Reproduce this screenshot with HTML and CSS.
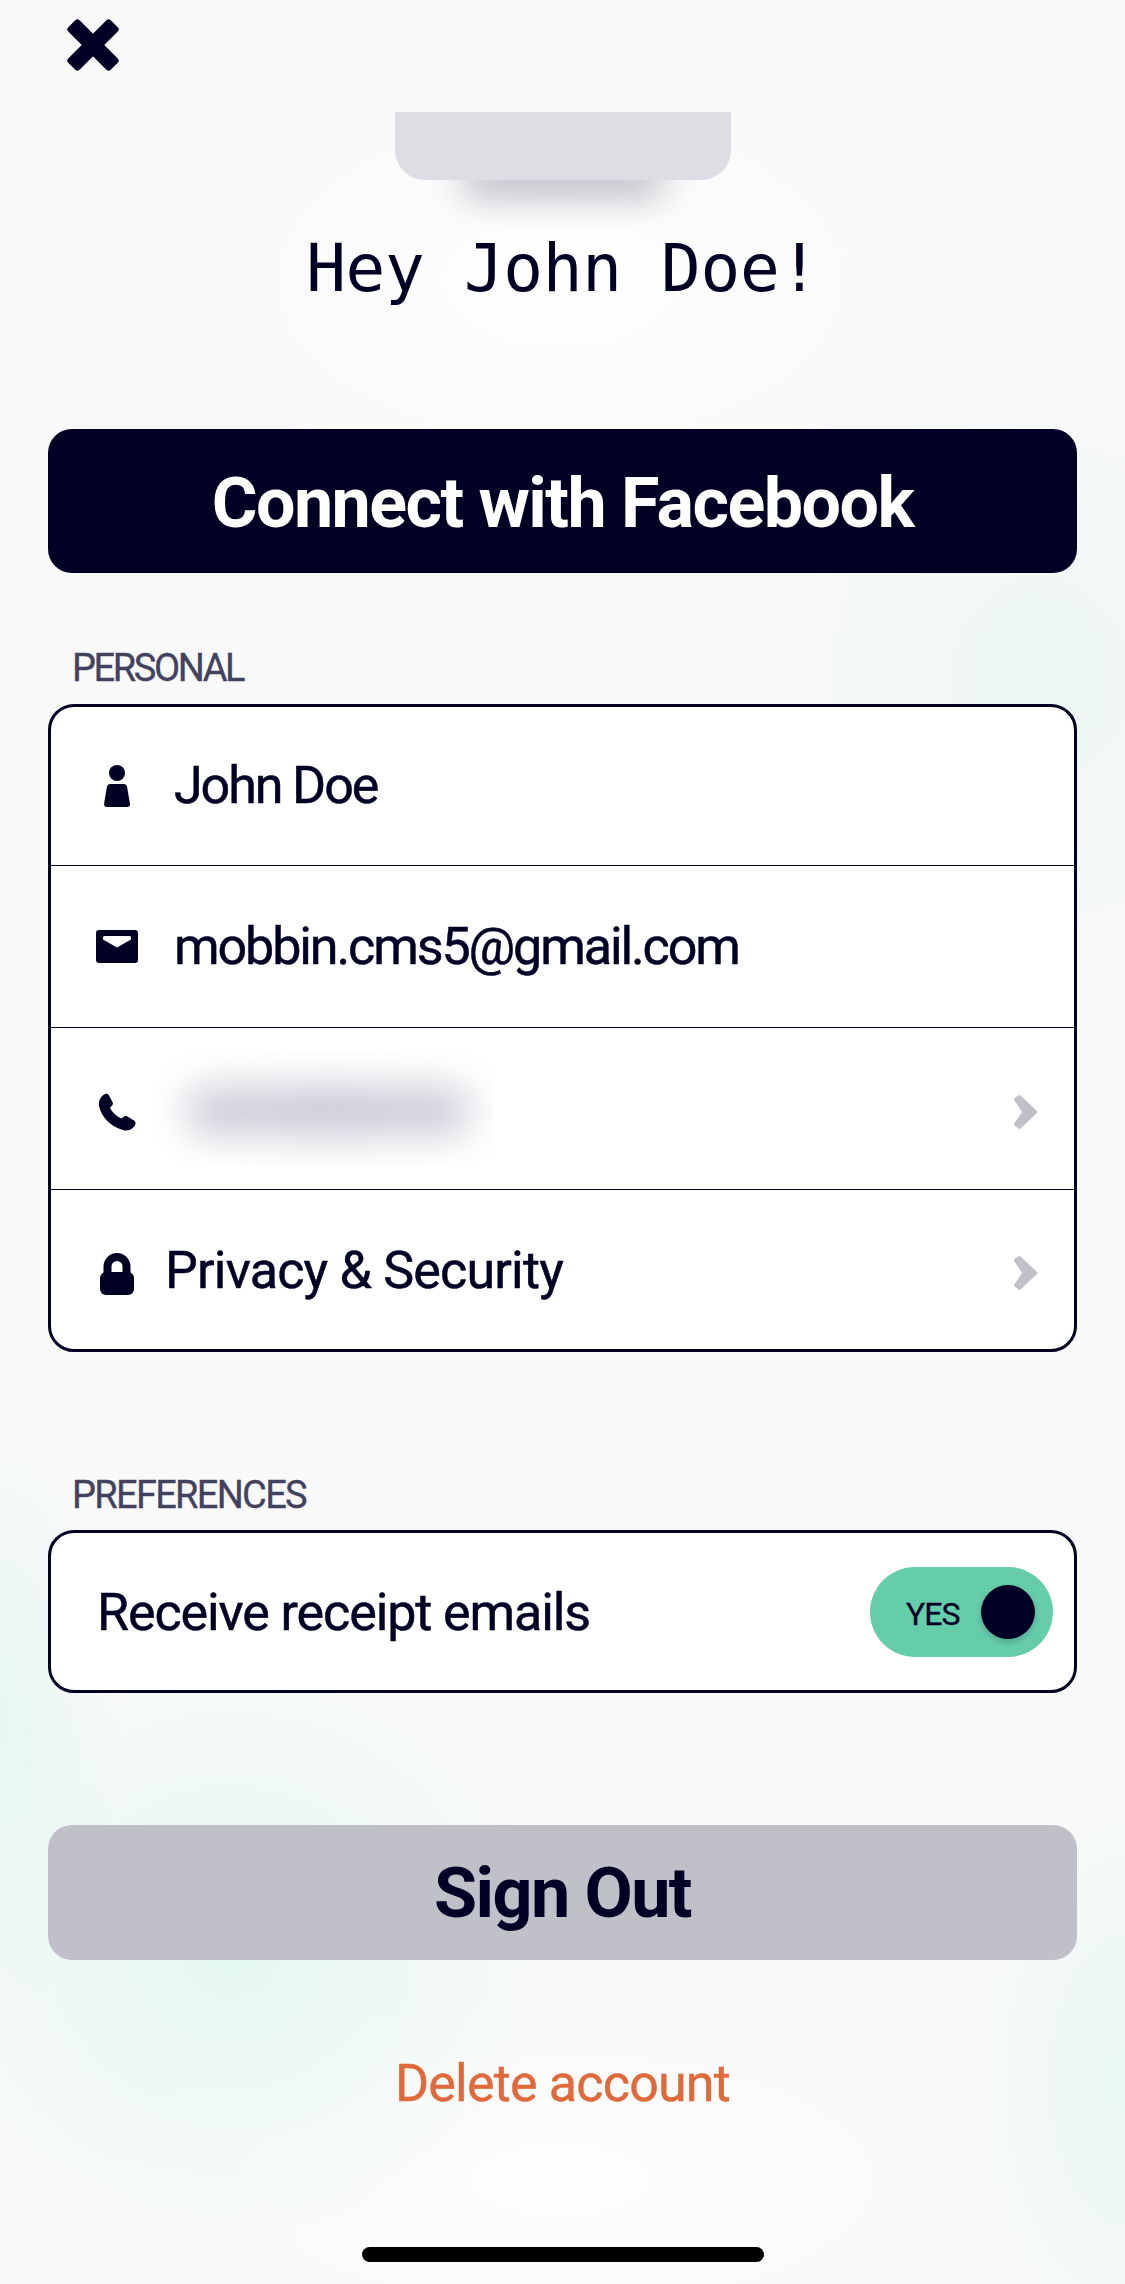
FILE: index.html
```html
<!DOCTYPE html>
<html lang="en">
<head>
<meta charset="utf-8">
<title>Account</title>
<link rel="stylesheet" href="styles.css">
</head>
<body>
<main class="page">
  <button class="close" aria-label="Close">
    <svg class="close-icon" viewBox="0 0 54 54"><g transform="rotate(45 27 27)"><rect x="-3" y="19" width="60" height="16" rx="3"/><rect x="19" y="-3" width="16" height="60" rx="3"/></g></svg>
  </button>
  <div class="avatar"></div>
  <h1 class="greeting">Hey John Doe!</h1>
  <button class="btn btn-primary">Connect with Facebook</button>

  <h2 class="label label-personal">PERSONAL</h2>
  <section class="card card-personal">
    <div class="row">
      <span class="slot"><svg class="icon-person" viewBox="0 0 26 42"><circle cx="13" cy="8" r="8"/><path d="M6 19h14q2.500 0 3 2.500L26 39q0 3-3 3H3q-3 0-3-3L3 21.500Q3.500 19 6 19Z"/></svg></span>
      <span class="text text-name">John Doe</span>
    </div>
    <div class="row">
      <span class="slot"><svg class="icon-mail" viewBox="0 0 42 33"><rect width="42" height="33" rx="3"/><path class="cut" d="M7 9.500L21 17.500L35 9.500V7.500Q35 6 33.500 6H8.500Q7 6 7 7.500Z"/></svg></span>
      <span class="text text-name">mobbin.cms5@gmail.com</span>
    </div>
    <div class="row">
      <span class="slot"><svg class="icon-phone" viewBox="0 0 38 38"><path d="M6 1.500C8 0 10 .5 11 2.500L14.500 9C15.500 11 14.500 12.500 12 14.500C13.500 18.500 18.500 23.500 23.500 25.500C25.500 23.500 27.500 22.500 29.500 23.500L36 27.500C38 29 38 31 36.500 33C33.500 37 29 38.500 25 37C13 34 3.500 24.500 1 13C0 8 2.500 4 6 1.500Z"/></svg></span>
      <span class="redacted" aria-hidden="true"><span class="smears"><i class="smear smear-a"></i><i class="smear smear-b"></i><i class="smear smear-c"></i></span></span>
      <svg class="chevron" viewBox="0 0 26 36"><path d="M1.500 5L6.500 1.500L24 18L6.500 34.500L1.500 30.500L10 18Z"/></svg>
    </div>
    <div class="row">
      <span class="slot"><svg class="icon-lock" viewBox="0 0 34 42"><path class="shackle" d="M7.500 22V13.500a9.500 9.500 0 0 1 19 0V22"/><rect y="19" width="34" height="23" rx="6"/></svg></span>
      <span class="text text-tight">Privacy &amp; Security</span>
      <svg class="chevron" viewBox="0 0 26 36"><path d="M1.500 5L6.500 1.500L24 18L6.500 34.500L1.500 30.500L10 18Z"/></svg>
    </div>
  </section>

  <h2 class="label label-prefs">PREFERENCES</h2>
  <section class="card card-prefs">
    <div class="row row-pref">
      <span class="text text-pref">Receive receipt emails</span>
      <span class="toggle"><span class="toggle-text">YES</span><span class="knob"></span></span>
    </div>
  </section>

  <button class="btn btn-secondary">Sign Out</button>
  <a class="delete">Delete account</a>
  <div class="home-indicator"></div>
</main>
</body>
</html>
```

FILE: styles.css
```css
* { box-sizing: border-box; }
html, body { margin: 0; padding: 0; }
body {
  width: 1125px;
  height: 2284px;
  overflow: hidden;
  font-family: Roboto, "Liberation Sans", sans-serif;
  color: #000024;
  background-color: #f9f9fa;
  background-image:
    radial-gradient(ellipse 260px 300px at 1040px 680px, rgba(225, 245, 237, .55), transparent),
    radial-gradient(ellipse 330px 300px at 230px 1950px, rgba(221, 247, 237, .75), transparent),
    radial-gradient(ellipse 160px 300px at 1125px 2080px, rgba(225, 247, 240, .7), transparent),
    radial-gradient(ellipse 120px 300px at 0 1720px, rgba(225, 247, 240, .8), transparent),
    radial-gradient(ellipse 420px 240px at 560px 280px, rgba(255, 255, 255, .8), transparent),
    radial-gradient(ellipse 500px 200px at 560px 2180px, rgba(255, 255, 255, .7), transparent);
}
.page {
  display: flex;
  flex-direction: column;
  height: 2284px;
  padding: 0 48px;
}
button { font-family: inherit; border: 0; padding: 0; }

.close {
  align-self: flex-start;
  width: 54px;
  height: 54px;
  margin: 18px 0 0 18px;
  background: none;
}
.close-icon { display: block; width: 54px; height: 54px; fill: #000024; }

.avatar {
  position: relative;
  align-self: center;
  width: 336px;
  height: 68px;
  margin-top: 40px;
  background: #dddde3;
  border-radius: 0 0 30px 30px;
}
.avatar::after {
  content: "";
  position: absolute;
  z-index: -1;
  left: 66px;
  right: 66px;
  top: 50px;
  height: 34px;
  border-radius: 17px;
  background: rgba(0, 0, 36, .28);
  filter: blur(18px);
}

.greeting {
  margin: 53px 0 0;
  height: 72px;
  text-align: center;
  font: 400 66px/72px "DejaVu Sans Mono", "Liberation Mono", monospace;
  letter-spacing: -.3px;
  color: #000024;
}

.btn {
  display: block;
  width: 100%;
  border-radius: 24px;
  font-weight: 700;
  text-align: center;
  font-size: 70px;
  letter-spacing: -1.55px;
}
.btn-primary {
  height: 144px;
  margin-top: 124px;
  padding-top: 4px;
  background: #000024;
  color: #fff;
}
.btn-secondary {
  height: 135px;
  margin-top: 132px;
  background: #c0c0c9;
  color: #000024;
}

.label {
  margin: 0;
  height: 44px;
  padding-left: 24px;
  font-size: 38px;
  line-height: 44px;
  font-weight: 400;
  color: #42425f;
  -webkit-text-stroke: .3px #42425f;
}
.label-personal { margin-top: 73px; margin-bottom: 14px; letter-spacing: -2.4px; }
.label-prefs { margin-top: 121px; margin-bottom: 13px; letter-spacing: -1.7px; }

.card {
  background: #fff;
  border: 3px solid #000024;
  border-radius: 26px;
}
.card-personal {
  height: 648px;
  display: grid;
  grid-template-rows: 159px 162px 162px 159px;
}
.card-prefs { height: 163px; display: flex; }

.row {
  display: flex;
  align-items: center;
  padding: 0 35px 0 37px;
  border-bottom: 1px solid #000024;
}
.row:last-child { border-bottom: 0; }
.row-pref {
  flex: 1;
  padding: 0 21px 0 46px;
  justify-content: space-between;
}

.slot {
  flex: none;
  width: 58px;
  display: flex;
  justify-content: center;
  align-items: center;
  margin-right: 28px;
}
.slot svg { display: block; fill: #000024; }
.icon-person { width: 26px; height: 42px; }
.icon-mail { width: 42px; height: 33px; }
.icon-mail .cut { fill: #fff; }
.icon-phone { width: 38px; height: 38px; margin-top: 6px; }
.icon-lock { width: 34px; height: 42px; margin-top: 8px; }
.icon-lock .shackle { fill: none; stroke: #000024; stroke-width: 8; }

.text {
  font-size: 52px;
  font-weight: 400;
  line-height: 60px;
  color: #000024;
  -webkit-text-stroke: .5px #000024;
}
.text-name { letter-spacing: -2.1px; }
.text-tight { margin-left: -9px; margin-top: 2px; letter-spacing: -.8px; }
.text-pref { margin-top: 2px; letter-spacing: -1.1px; }

.redacted {
  display: block;
  width: 340px;
  height: 116px;
  margin-left: -22px;
  overflow: hidden;
}
.smears {
  position: relative;
  display: block;
  width: 100%;
  height: 100%;
  filter: blur(20px);
}
.smear {
  position: absolute;
  top: 38px;
  height: 44px;
  background: #c6c6d2;
  border-radius: 14px;
}
.smear-a { left: 36px; width: 86px; }
.smear-b { left: 118px; width: 120px; top: 36px; height: 48px; }
.smear-c { left: 232px; width: 84px; }

.chevron {
  flex: none;
  width: 26px;
  height: 36px;
  margin-left: auto;
  margin-top: 7px;
  fill: #c0c0c9;
  stroke: #c0c0c9;
  stroke-width: 1.500;
  stroke-linejoin: round;
}

.toggle {
  flex: none;
  display: flex;
  align-items: center;
  width: 183px;
  height: 90px;
  padding: 0 18px 0 36px;
  border-radius: 45px;
  background: #66cdaa;
}
.toggle-text {
  margin-top: 4px;
  font-size: 32px;
  font-weight: 400;
  letter-spacing: -1px;
  color: #000024;
  -webkit-text-stroke: .3px #000024;
}
.knob {
  width: 54px;
  height: 54px;
  margin-left: auto;
  border-radius: 50%;
  background: #000024;
  box-shadow: 0 3px 6px rgba(0, 0, 36, .2);
}

.delete {
  margin-top: 94px;
  text-align: center;
  font-size: 52px;
  font-weight: 400;
  letter-spacing: -.8px;
  line-height: 60px;
  color: #df693a;
  -webkit-text-stroke: .4px #df693a;
}
.home-indicator {
  align-self: center;
  width: 402px;
  height: 15px;
  margin-top: 133px;
  border-radius: 8px;
  background: #000;
}
```
